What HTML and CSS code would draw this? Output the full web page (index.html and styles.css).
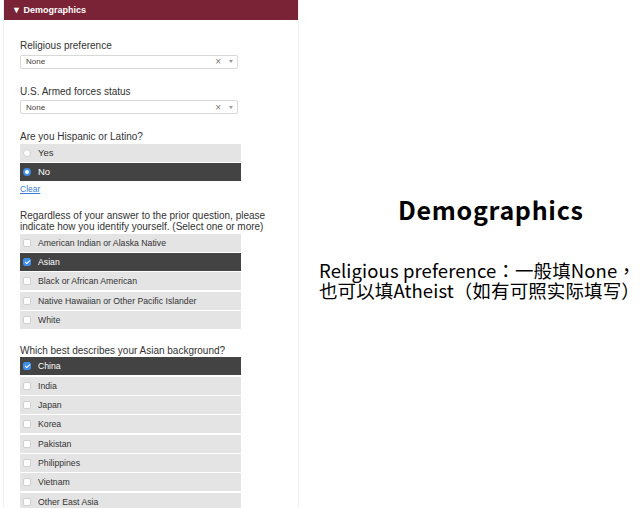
FILE: index.html
```html
<!DOCTYPE html>
<html lang="en">

<head>
    <meta charset="UTF-8">
    <title>Demographics</title>
    <link rel="stylesheet" href="styles.css">
</head>

<body>

    <!-- Form panel -->
    <section class="panel">
        <div class="panel-head">&#9660; Demographics</div>

        <div class="panel-body">
            <div class="field">
                <p class="label">Religious preference</p>
                <div class="select">
                    <span>None</span>
                    <span class="select-ctrl"><span class="clear-x">&times;</span><span class="caret"></span></span>
                </div>
            </div>

            <div class="field">
                <p class="label">U.S. Armed forces status</p>
                <div class="select">
                    <span>None</span>
                    <span class="select-ctrl"><span class="clear-x">&times;</span><span class="caret"></span></span>
                </div>
            </div>

            <div class="field">
                <p class="label">Are you Hispanic or Latino?</p>
                <div class="options">
                    <div class="option big"><span class="radio"></span>Yes</div>
                    <div class="option big selected"><span class="radio on"></span>No</div>
                </div>
                <a href="#" class="clear-link">Clear</a>
            </div>

            <div class="field">
                <p class="label">Regardless of your answer to the prior question, please indicate how you identify yourself. (Select one or more)</p>
                <div class="options">
                    <div class="option"><span class="check"></span>American Indian or Alaska Native</div>
                    <div class="option selected"><span class="check on"></span>Asian</div>
                    <div class="option"><span class="check"></span>Black or African American</div>
                    <div class="option"><span class="check"></span>Native Hawaiian or Other Pacific Islander</div>
                    <div class="option"><span class="check"></span>White</div>
                </div>
            </div>

            <div class="field">
                <p class="label">Which best describes your Asian background?</p>
                <div class="options">
                    <div class="option selected"><span class="check on"></span>China</div>
                    <div class="option"><span class="check"></span>India</div>
                    <div class="option"><span class="check"></span>Japan</div>
                    <div class="option"><span class="check"></span>Korea</div>
                    <div class="option"><span class="check"></span>Pakistan</div>
                    <div class="option"><span class="check"></span>Philippines</div>
                    <div class="option"><span class="check"></span>Vietnam</div>
                    <div class="option"><span class="check"></span>Other East Asia</div>
                </div>
            </div>
        </div>
    </section>

    <!-- Notes -->
    <section class="notes">
        <h2>Demographics</h2>
        <p>Religious preference：一般填None，<br>也可以填Atheist（如有可照实际填写）</p>
    </section>

</body>

</html>
```

FILE: styles.css
```css
* {
    margin: 0;
    padding: 0;
    box-sizing: border-box;
}

body {
    width: 640px;
    height: 508px;
    overflow: hidden;
    background-color: #fff;
    display: flex;
    font-family: "Liberation Sans", Arial, sans-serif;
}

/* Left form panel */
.panel {
    width: 296px;
    margin-left: 3px;
    border-left: 1px solid #f0f0f0;
    border-right: 1px solid #f0f0f0;
}

.panel-head {
    background-color: #7b2336;
    color: #fff;
    font-weight: bold;
    font-size: 9px;
    height: 20px;
    line-height: 20px;
    padding-left: 8px;
}

.panel-body {
    padding: 20px 0 0 16px;
}

.field {
    margin-bottom: 16px;
}

.field:nth-child(-n+2) {
    margin-bottom: 17px;
}

.label {
    font-size: 10px;
    color: #333;
    line-height: 11.5px;
    margin-bottom: 3px;
}

.select {
    width: 218px;
    height: 14px;
    border: 1px solid #d8d8d8;
    border-radius: 2px;
    display: flex;
    align-items: center;
    justify-content: space-between;
    padding: 0 4px 0 5px;
    font-size: 8px;
    color: #444;
}

.select-ctrl {
    display: flex;
    align-items: center;
    gap: 8px;
    color: #777;
}

.clear-x {
    font-size: 10px;
}

.caret {
    width: 0;
    height: 0;
    border-left: 2.5px solid transparent;
    border-right: 2.5px solid transparent;
    border-top: 3px solid #999;
}

.options {
    width: 221px;
    display: flex;
    flex-direction: column;
    gap: 1.3px;
    margin-top: -2px;
}

.option {
    height: 18px;
    background-color: #e4e4e4;
    display: flex;
    align-items: center;
    padding-left: 3px;
    font-size: 8.7px;
    color: #333;
}

.option.big {
    font-size: 9.5px;
}

.option.selected {
    background-color: #434343;
    color: #fff;
}

.check, .radio {
    width: 8px;
    height: 8px;
    background-color: #fff;
    border: 1px solid #d0d0d0;
    margin-right: 7px;
    flex-shrink: 0;
}

.check {
    border-radius: 2px;
    position: relative;
}

.radio {
    border-radius: 50%;
}

.check.on {
    background-color: #3d8fe8;
    border-color: #3d8fe8;
}

.check.on::after {
    content: "";
    position: absolute;
    left: 2px;
    top: 0;
    width: 2px;
    height: 4px;
    border: solid #fff;
    border-width: 0 1px 1px 0;
    transform: rotate(45deg);
}

.radio.on {
    background-color: #fff;
    border: 2.5px solid #3d8fe8;
}

.clear-link {
    display: block;
    font-size: 8.5px;
    color: #3a7bd5;
    margin-top: 3px;
}

/* Right notes */
.notes {
    flex: 1;
    padding-left: 20px;
    font-family: "Noto Sans CJK TC", "Noto Sans CJK SC", sans-serif;
    color: #000;
}

.notes h2 {
    font-size: 25px;
    font-weight: bold;
    letter-spacing: 0.7px;
    margin-top: 191px;
    padding-left: 79px;
}

.notes p {
    font-size: 18.5px;
    line-height: 19.5px;
    margin-top: 34px;
    letter-spacing: 0.1px;
    white-space: nowrap;
}
```
